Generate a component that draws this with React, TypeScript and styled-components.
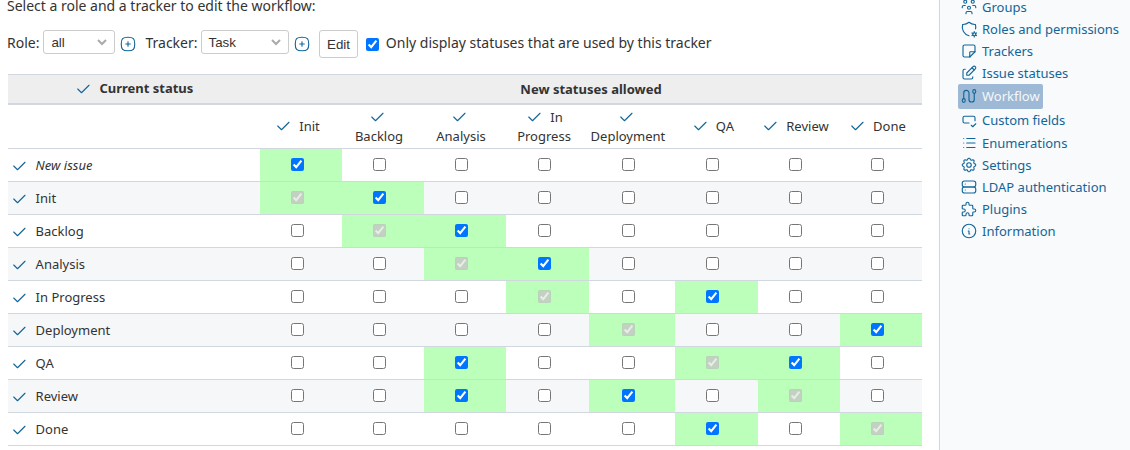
import React from "react";
import styled, { createGlobalStyle, css } from "styled-components";
import type { IconType } from "react-icons";
import {
  TbCheck, TbSquareRoundedPlus, TbUsersGroup, TbShieldCog, TbNote, TbEdit,
  TbInputCheck, TbList, TbSettings, TbServer, TbPuzzle, TbInfoCircle,
} from "react-icons/tb";

const Global = createGlobalStyle`
  * { box-sizing: border-box; }
  body {
    margin: 0;
    background: #fff;
    color: #333;
    font-family: "Noto Sans", sans-serif;
    font-size: 14px;
    overflow: hidden;
  }
`;

const Page = styled.div`
  display: grid;
  grid-template-columns: 939px 191px;
  height: 450px;
  overflow: hidden;
`;

const Main = styled.main`
  padding: 0 17px 0 8px;
`;

const Intro = styled.p`
  margin: -4px 0 0 -1px;
  height: 20px;
  line-height: 20px;
  white-space: nowrap;
`;

const Filters = styled.form`
  display: flex;
  align-items: center;
  height: 30px;
  margin: 13px 0 15px -1px;
  white-space: nowrap;
`;

const FilterLabel = styled.span`
  line-height: 20px;
  margin-top: -2px;
`;

const Dropdown = styled.div<{ $width: number; $gap: number }>`
  display: flex;
  align-items: center;
  justify-content: space-between;
  width: ${(p) => p.$width}px;
  height: 24px;
  margin: -4px 0 0 ${(p) => p.$gap}px;
  padding: 1px 7px 0;
  border: 1px solid #ccc;
  border-radius: 3px;
  font: 13.33px "Liberation Sans", sans-serif;
`;

const Expand = styled.span`
  display: flex;
  margin: 0 8px 0 4px;
`;

const EditButton = styled.button`
  width: 39px;
  height: 28px;
  margin: 0 8px 0 0;
  padding: 0 0 0 1px;
  border: 1px solid #ccc;
  border-radius: 3px;
  background: #fff;
  color: #333;
  font: 13.33px "Liberation Sans", sans-serif;
`;

const Check = styled.input.attrs({ type: "checkbox", readOnly: true })`
  display: block;
  width: 13px;
  height: 13px;
  margin: 0;
`;

const Table = styled.div`
  width: 914px;
  font-size: 13px;
  border-top: 1px solid #d0d7de;
`;

const columns = css`
  display: grid;
  grid-template-columns: 252px 82px 82px 82px 83px 85.8px 83.2px 82px 82px;
`;

const TitleRow = styled.div`
  display: grid;
  grid-template-columns: 252px 1fr;
  height: 30px;
  border-bottom: 2px solid #d0d7de;
  background: #eee;
  font-weight: bold;
`;

const Title = styled.div<{ $lift: number }>`
  display: flex;
  align-items: center;
  justify-content: center;
  padding-bottom: ${(p) => p.$lift}px;
  svg { margin: 2px 1px 0 -1px; }
`;

const HeadRow = styled.div`
  ${columns}
  height: 44px;
  border-bottom: 1px solid #d0d7de;
`;

const HeadCell = styled.div<{ $inset?: number }>`
  display: flex;
  align-items: center;
  justify-content: center;
  padding-right: ${(p) => p.$inset ?? 8}px;
  text-align: center;
  line-height: 19px;
`;

const HeadText = styled.div<{ $stacked: boolean }>`
  svg {
    vertical-align: -4px;
    margin-right: ${(p) => (p.$stacked ? 4 : 7)}px;
  }
`;

const Row = styled.div<{ $odd: boolean }>`
  ${columns}
  height: 33px;
  border-bottom: 1px solid #d0d7de;
  background: ${(p) => (p.$odd ? "#f6f7f8" : "#fff")};
`;

const Status = styled.div<{ $italic: boolean }>`
  display: flex;
  align-items: center;
  padding-left: 2px;
  font-style: ${(p) => (p.$italic ? "italic" : "normal")};
  svg { margin: 1px 7.6px 0 0; }
`;

const Cell = styled.div<{ $on: boolean }>`
  display: flex;
  align-items: center;
  justify-content: center;
  padding: 0 7px 0.2px 0;
  background: ${(p) => (p.$on ? "#bfb" : "transparent")};
`;

const Sidebar = styled.aside`
  display: flex;
  flex-direction: column;
  align-items: flex-start;
  padding-left: 18px;
  border-left: 1px solid #d0d7de;
  background: #f9fafc;
`;

const Item = styled.a<{ $selected: boolean; $top: number }>`
  display: flex;
  align-items: center;
  height: ${(p) => (p.$selected ? 25 : 20)}px;
  margin: ${(p) => p.$top}px 0 0 0;
  padding: ${(p) => (p.$selected ? "0 3px 1px 2px" : "0 3px 0 2px")};
  border-radius: 2px;
  color: ${(p) => (p.$selected ? "#f6f7f8" : "#169")};
  background: ${(p) => (p.$selected ? "#9db9d5" : "transparent")};
  font-size: 13px;
  white-space: nowrap;
  svg { margin-right: 4px; color: #169; }
`;

const Glyph = ({ icon: Icon, size = 18 }: { icon: IconType; size?: number }) => (
  <Icon size={size} color="#169" style={{ strokeWidth: 1.5, flexShrink: 0 }} />
);

const WorkflowIcon: IconType = ({ size, color, style }) => (
  <svg
    width={size} height={size} viewBox="0 0 24 24" fill="none" stroke={color}
    strokeLinecap="round" strokeLinejoin="round" style={style}
  >
    <ellipse cx="5" cy="18" rx="2" ry="2.5" />
    <ellipse cx="19" cy="6" rx="2" ry="2.5" />
    <path d="M5 15.5V8a3.5 3.5 0 0 1 7 0v8.5a3.5 3.5 0 0 0 7 0V8.5" />
  </svg>
);

const Chevron = () => (
  <svg width="10" height="7" viewBox="0 0 10 7" fill="none" stroke="#aaa" strokeWidth="2">
    <path d="M1 1l4 4 4-4" />
  </svg>
);

const heads: [string, string?][] = [
  ["Init"], ["", "Backlog"], ["", "Analysis"], ["In", "Progress"],
  ["", "Deployment"], ["QA"], ["Review"], ["Done"],
];

// One character per transition: x allowed, d fixed (same status), . not allowed
const rows: [string, string][] = [
  ["New issue", "x......."],
  ["Init", "dx......"],
  ["Backlog", ".dx....."],
  ["Analysis", "..dx...."],
  ["In Progress", "...d.x.."],
  ["Deployment", "....d..x"],
  ["QA", "..x..dx."],
  ["Review", "..x.x.d."],
  ["Done", ".....x.d"],
];

const menu: [string, IconType, number][] = [
  ["Groups", TbUsersGroup, -3],
  ["Roles and permissions", TbShieldCog, 2],
  ["Trackers", TbNote, 2],
  ["Issue statuses", TbEdit, 2],
  ["Workflow", WorkflowIcon, 1],
  ["Custom fields", TbInputCheck, 1],
  ["Enumerations", TbList, 3],
  ["Settings", TbSettings, 2],
  ["LDAP authentication", TbServer, 2],
  ["Plugins", TbPuzzle, 2],
  ["Information", TbInfoCircle, 2],
];

export default function App() {
  return (
    <>
      <Global />
      <Page>
        <Main>
          <Intro>Select a role and a tracker to edit the workflow:</Intro>
          <Filters>
            <FilterLabel>Role:</FilterLabel>
            <Dropdown $width={72} $gap={4}>all<Chevron /></Dropdown>
            <Expand><Glyph icon={TbSquareRoundedPlus} /></Expand>
            <FilterLabel>Tracker:</FilterLabel>
            <Dropdown $width={88} $gap={3}>Task<Chevron /></Dropdown>
            <Expand><Glyph icon={TbSquareRoundedPlus} /></Expand>
            <EditButton type="button">Edit</EditButton>
            <Check checked />
            <FilterLabel>&nbsp; Only display statuses that are used by this tracker</FilterLabel>
          </Filters>
          <Table>
            <TitleRow>
              <Title $lift={2}><Glyph icon={TbCheck} />&nbsp; Current status</Title>
              <Title $lift={0}>New statuses allowed</Title>
            </TitleRow>
            <HeadRow>
              <HeadCell />
              {heads.map(([first, second], i) => (
                <HeadCell key={i} $inset={first && second ? 7 : 8}>
                  <HeadText $stacked={first === ""}>
                    <Glyph icon={TbCheck} />{first}
                    {second && <><br />{second}</>}
                  </HeadText>
                </HeadCell>
              ))}
            </HeadRow>
            {rows.map(([name, marks], r) => (
              <Row key={name} $odd={r % 2 === 1}>
                <Status $italic={r === 0}><Glyph icon={TbCheck} />{name}</Status>
                {marks.split("").map((m, i) => (
                  <Cell key={i} $on={m !== "."}>
                    <Check checked={m !== "."} disabled={m === "d"} />
                  </Cell>
                ))}
              </Row>
            ))}
          </Table>
        </Main>
        <Sidebar>
          {menu.map(([name, icon, top]) => (
            <Item key={name} $selected={name === "Workflow"} $top={top}>
              <Glyph icon={icon} />{name}
            </Item>
          ))}
        </Sidebar>
      </Page>
    </>
  );
}
